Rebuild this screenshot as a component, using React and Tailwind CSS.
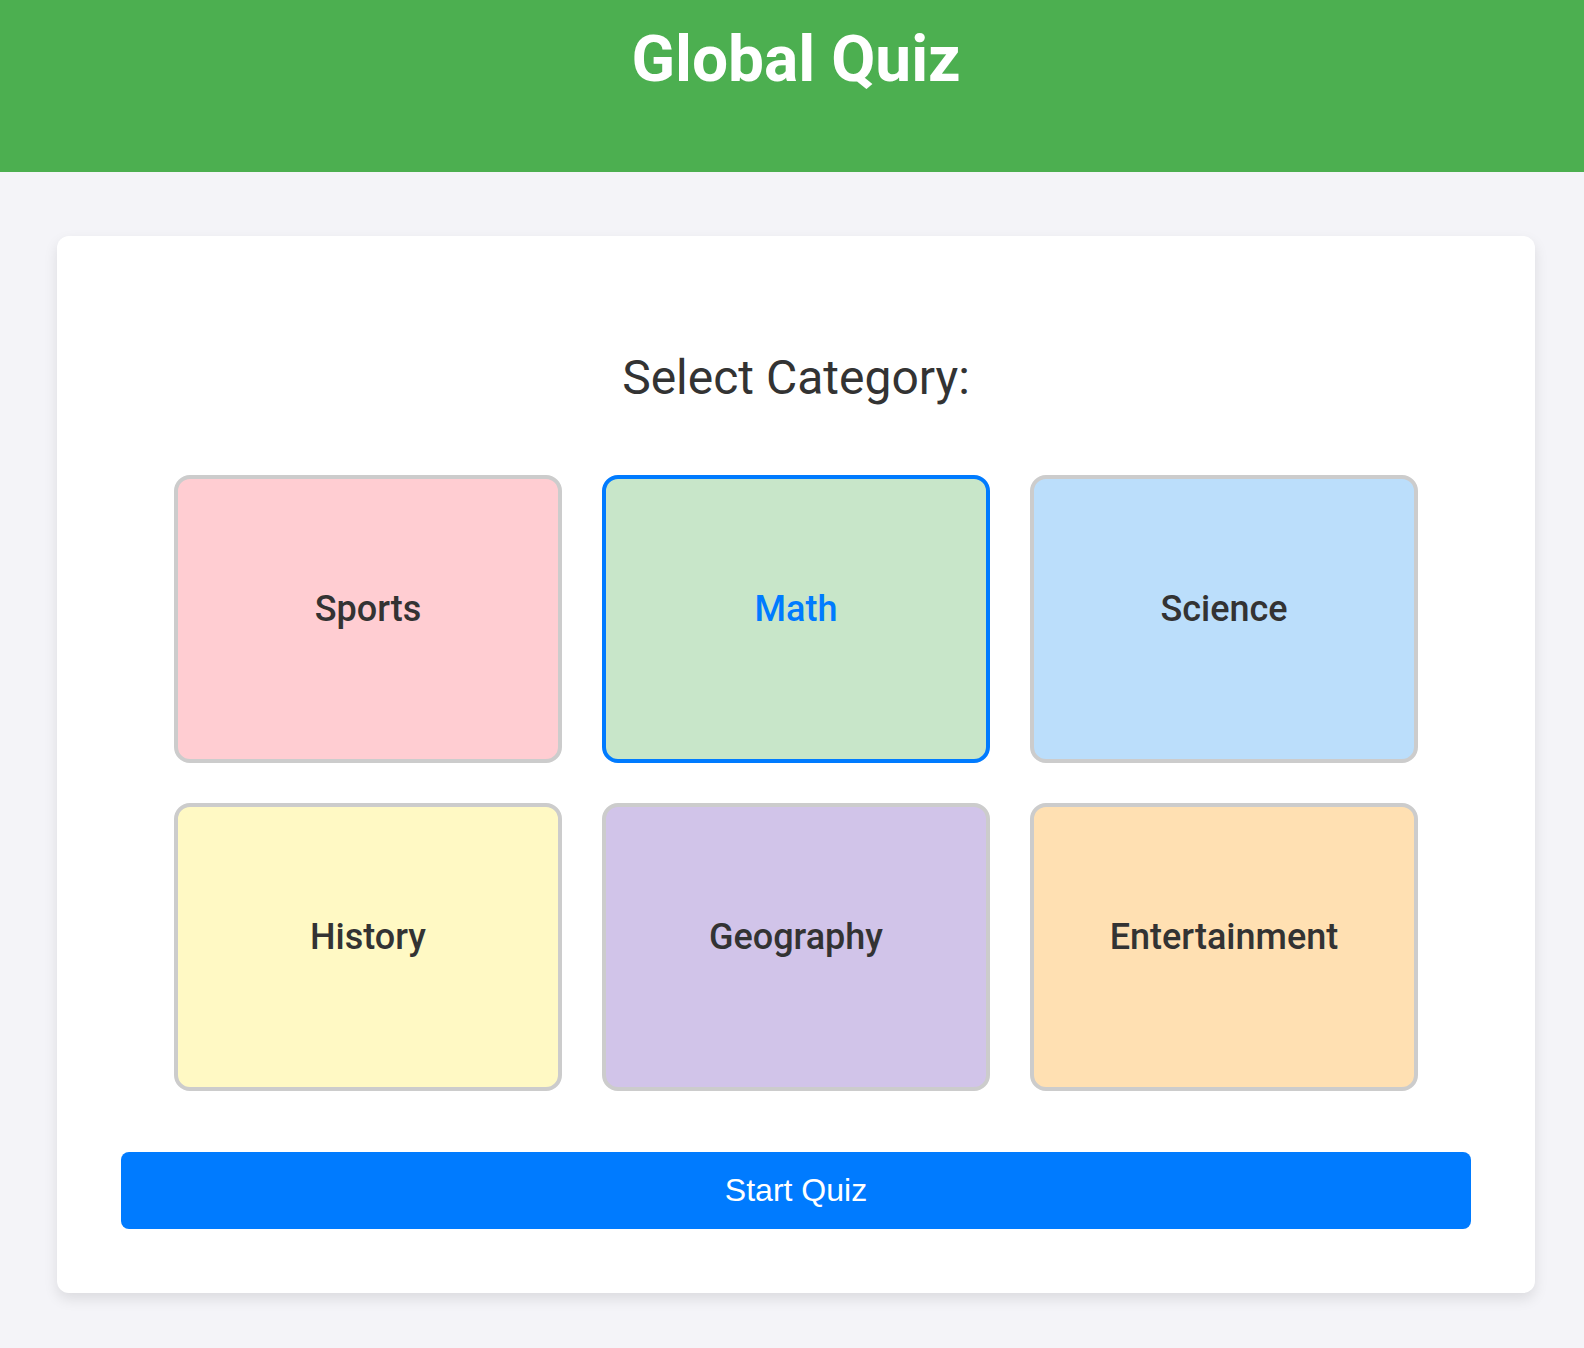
import { useState } from "react";

const categories = [
  { label: "Sports", bg: "bg-[#ffcdd2]" },
  { label: "Math", bg: "bg-[#c8e6c9]" },
  { label: "Science", bg: "bg-[#bbdefb]" },
  { label: "History", bg: "bg-[#fff9c4]" },
  { label: "Geography", bg: "bg-[#d1c4e9]" },
  { label: "Entertainment", bg: "bg-[#ffe0b2]" },
];

export default function App() {
  const [selected, setSelected] = useState("Math");

  return (
    <div className="min-h-[1348px] bg-[#f4f4f8] font-['Roboto',sans-serif] text-[#333]">
      {/* Header */}
      <header className="h-[172px] bg-[#4caf50] pl-2 pt-[22px]">
        <h1 className="text-center text-[64px] leading-[normal] font-bold text-white">Global Quiz</h1>
      </header>

      {/* Quiz card */}
      <main className="pl-[57px] pr-[49px] pt-16">
        <div className="rounded-xl bg-white px-16 pt-[113px] pb-16 shadow-[0_6px_14px_rgba(0,0,0,0.1)]">
          <h2 className="text-center text-[48px] leading-[normal]">Select Category:</h2>

          <div className="mt-[69px] grid grid-cols-[repeat(3,388px)] justify-center gap-10">
            {categories.map((cat) => {
              const active = cat.label === selected;
              return (
                <button
                  key={cat.label}
                  onClick={() => setSelected(cat.label)}
                  className={`flex h-[288px] items-center justify-center rounded-2xl border-4 pb-5 text-[36px] font-medium ${cat.bg} ${
                    active ? "border-[#007bff] text-[#007bff]" : "border-[#cccccc] text-[#333]"
                  }`}
                >
                  {cat.label}
                </button>
              );
            })}
          </div>

          <button className="mt-[61px] w-full rounded-lg bg-[#007bff] py-5 font-['Liberation_Sans',Arial,sans-serif] text-[32px] leading-[normal] text-white">
            Start Quiz
          </button>
        </div>
      </main>
    </div>
  );
}
